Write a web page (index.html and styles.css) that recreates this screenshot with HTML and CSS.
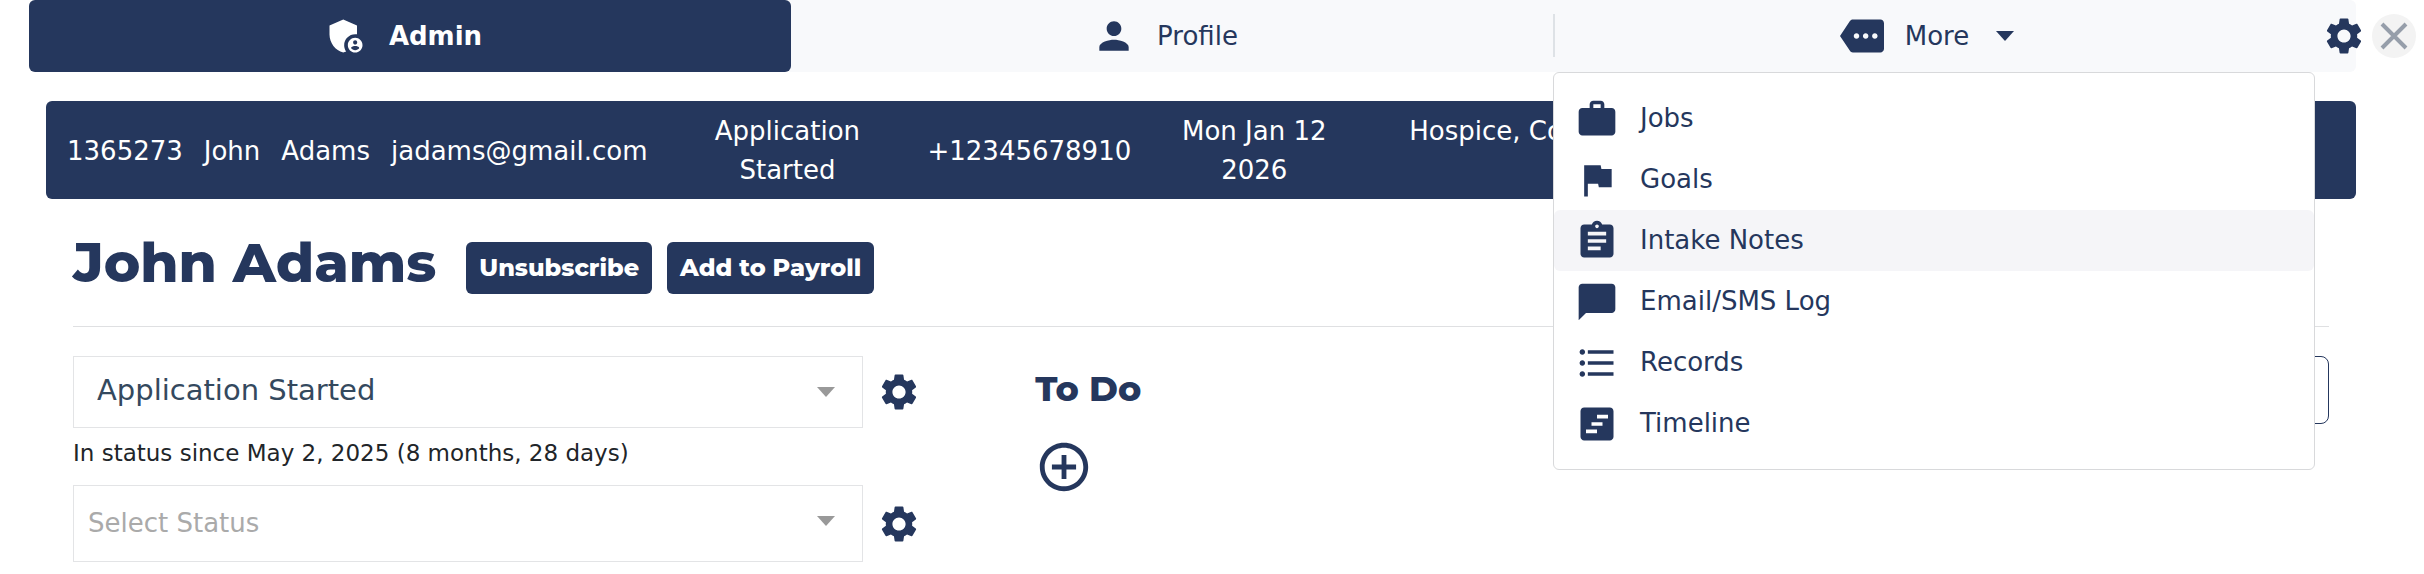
FILE: index.html
```html
<!DOCTYPE html>
<html lang="en">
<head>
  <meta charset="UTF-8" />
  <meta name="viewport" content="width=device-width, initial-scale=1.0"/>
  <title>John Adams</title>
  <link rel="stylesheet" href="styles.css">
</head>
<body>

  <!-- Gear shape shared by the settings buttons -->
  <svg class="sprite">
    <symbol id="gear" viewBox="0 0 24 24"><path d="M19.14 12.94c.04-.3.06-.61.06-.94 0-.32-.02-.64-.07-.94l2.03-1.58c.18-.14.23-.41.12-.61l-1.92-3.32c-.12-.22-.37-.29-.59-.22l-2.39.96c-.5-.38-1.03-.7-1.62-.94l-.36-2.54c-.04-.24-.24-.41-.48-.41h-3.84c-.24 0-.43.17-.47.41l-.36 2.54c-.59.24-1.13.57-1.62.94l-2.39-.96c-.22-.08-.47 0-.59.22L2.74 8.87c-.12.21-.08.47.12.61l2.03 1.58c-.05.3-.09.63-.09.94s.02.64.07.94l-2.03 1.58c-.18.14-.23.41-.12.61l1.92 3.32c.12.22.37.29.59.22l2.39-.96c.5.38 1.03.7 1.62.94l.36 2.54c.05.24.24.41.48.41h3.84c.24 0 .44-.17.47-.41l.36-2.54c.59-.24 1.13-.56 1.62-.94l2.39.96c.22.08.47 0 .59-.22l1.92-3.32c.12-.22.07-.47-.12-.61l-2.01-1.58zM12 15.6c-1.98 0-3.6-1.62-3.6-3.6s1.62-3.6 3.6-3.6 3.6 1.62 3.6 3.6-1.62 3.6-3.6 3.6z"/></symbol>
  </svg>

  <!-- Top bar -->
  <header class="topbar">
    <nav class="tabs">
      <button type="button" class="tab active">
        <svg class="icon" viewBox="0 0 24 24"><path d="M17 11c.34 0 .67.04 1 .09V6.27L10.5 3 3 6.27v4.91c0 4.54 3.2 8.79 7.5 9.82.55-.13 1.08-.32 1.6-.55-.69-.98-1.1-2.17-1.1-3.45 0-3.31 2.69-6 6-6z"/><path d="M17 13c-2.21 0-4 1.79-4 4s1.79 4 4 4 4-1.79 4-4-1.79-4-4-4zm0 1.38c.62 0 1.12.51 1.12 1.12s-.51 1.12-1.12 1.12-1.12-.51-1.12-1.12.5-1.12 1.12-1.12zm0 5.37c-.93 0-1.74-.46-2.24-1.17.05-.72 1.51-1.08 2.24-1.08s2.19.36 2.24 1.08c-.5.71-1.31 1.17-2.24 1.17z"/></svg>
        <span>Admin</span>
      </button>
      <button type="button" class="tab">
        <svg class="icon" viewBox="0 0 24 24"><path d="M12 12c2.21 0 4-1.79 4-4s-1.79-4-4-4-4 1.79-4 4 1.79 4 4 4zm0 2c-2.67 0-8 1.34-8 4v2h16v-2c0-2.66-5.33-4-8-4z"/></svg>
        <span>Profile</span>
      </button>
      <div class="tab-more">
        <button type="button" class="tab" aria-expanded="true">
          <svg class="icon" viewBox="0 0 24 24"><path d="M22 3H7c-.69 0-1.23.35-1.59.88L0 12l5.41 8.11c.36.53.9.89 1.59.89h15c1.1 0 2-.9 2-2V5c0-1.1-.9-2-2-2zM9 13.5c-.83 0-1.5-.67-1.5-1.5s.67-1.5 1.5-1.5 1.5.67 1.5 1.5-.67 1.5-1.5 1.5zm5 0c-.83 0-1.5-.67-1.5-1.5s.67-1.5 1.5-1.5 1.5.67 1.5 1.5-.67 1.5-1.5 1.5zm5 0c-.83 0-1.5-.67-1.5-1.5s.67-1.5 1.5-1.5 1.5.67 1.5 1.5-.67 1.5-1.5 1.5z"/></svg>
          <span>More</span>
          <span class="caret"></span>
        </button>
        <div class="menu">
          <a href="#" class="menu-item">
            <svg class="icon" viewBox="0 0 24 24"><path d="M20 6h-4V4c0-1.11-.89-2-2-2h-4c-1.11 0-2 .89-2 2v2H4c-1.11 0-2 .89-2 2v11c0 1.11.89 2 2 2h16c1.11 0 2-.89 2-2V8c0-1.11-.89-2-2-2zm-6 0h-4V4h4v2z"/></svg>
            Jobs
          </a>
          <a href="#" class="menu-item">
            <svg class="icon" viewBox="0 0 24 24"><path d="M14.4 6L14 4H5v17h2v-7h5.6l.4 2h7V6z"/></svg>
            Goals
          </a>
          <a href="#" class="menu-item hovered">
            <svg class="icon" viewBox="0 0 24 24"><path d="M19 3h-4.18C14.4 1.84 13.3 1 12 1c-1.3 0-2.4.84-2.82 2H5c-1.1 0-2 .9-2 2v14c0 1.1.9 2 2 2h14c1.1 0 2-.9 2-2V5c0-1.1-.9-2-2-2zm-7 0c.55 0 1 .45 1 1s-.45 1-1 1-1-.45-1-1 .45-1 1-1zm2 14H7v-2h7v2zm3-4H7v-2h10v2zm0-4H7V7h10v2z"/></svg>
            Intake Notes
          </a>
          <a href="#" class="menu-item">
            <svg class="icon" viewBox="0 0 24 24"><path d="M20 2H4c-1.1 0-2 .9-2 2v18l4-4h14c1.1 0 2-.9 2-2V4c0-1.1-.9-2-2-2z"/></svg>
            Email/SMS Log
          </a>
          <a href="#" class="menu-item">
            <svg class="icon" viewBox="0 0 24 24"><path d="M4 10.5c-.83 0-1.5.67-1.5 1.5s.67 1.5 1.5 1.5 1.5-.67 1.5-1.5-.67-1.5-1.5-1.5zm0-6c-.83 0-1.5.67-1.5 1.5S3.17 7.5 4 7.5 5.5 6.83 5.5 6 4.83 4.5 4 4.5zm0 12c-.83 0-1.5.68-1.5 1.5s.68 1.5 1.5 1.5 1.5-.68 1.5-1.5-.67-1.5-1.5-1.5zM7 19h14v-2H7v2zm0-6h14v-2H7v2zm0-8v2h14V5H7z"/></svg>
            Records
          </a>
          <a href="#" class="menu-item">
            <svg class="icon" viewBox="0 0 24 24"><path d="M19 3H5c-1.1 0-2 .9-2 2v14c0 1.1.9 2 2 2h14c1.1 0 2-.9 2-2V5c0-1.1-.9-2-2-2zm-7 14H6v-2h6v2zm3-4H9v-2h6v2zm3-4h-6V7h6v2z"/></svg>
            Timeline
          </a>
        </div>
      </div>
      <button type="button" class="icon-btn tabs-settings" aria-label="Settings">
        <svg class="icon"><use href="#gear"/></svg>
      </button>
    </nav>
    <button type="button" class="close-btn" aria-label="Close">
      <svg viewBox="0 0 44 44"><path d="M10 10l24 24M34 10L10 34"/></svg>
    </button>
  </header>

  <!-- Applicant summary -->
  <section class="summary">
    <span>1365273</span>
    <span>John</span>
    <span>Adams</span>
    <span>jadams@gmail.com</span>
    <span class="summary-status">Application Started</span>
    <span>+12345678910</span>
    <span class="summary-date">Mon Jan 12 2026</span>
    <span class="summary-services">Hospice, Companion</span>
  </section>

  <main class="content">
    <div class="title-row">
      <h1>John Adams</h1>
      <button type="button" class="btn">Unsubscribe</button>
      <button type="button" class="btn">Add to Payroll</button>
    </div>

    <div class="columns">
      <section>
        <div class="field">
          <div class="select-wrap">
            <select class="select-current" aria-label="Current status">
              <option>Application Started</option>
            </select>
          </div>
          <button type="button" class="icon-btn" aria-label="Status settings">
            <svg class="icon"><use href="#gear"/></svg>
          </button>
        </div>
        <p class="since">In status since May 2, 2025 (8 months, 28 days)</p>
        <div class="field">
          <div class="select-wrap">
            <select class="select-next" aria-label="Select status">
              <option>Select Status</option>
            </select>
          </div>
          <button type="button" class="icon-btn" aria-label="Status settings">
            <svg class="icon"><use href="#gear"/></svg>
          </button>
        </div>
      </section>

      <section>
        <h2>To Do</h2>
        <button type="button" class="icon-btn add-btn" aria-label="Add to do">
          <svg viewBox="0 0 24 24"><path d="M13 7h-2v4H7v2h4v4h2v-4h4v-2h-4V7zm-1-5C6.48 2 2 6.48 2 12s4.48 10 10 10 10-4.48 10-10S17.52 2 12 2zm0 18c-4.41 0-8-3.59-8-8s3.59-8 8-8 8 3.59 8 8-3.59 8-8 8z"/></svg>
        </button>
      </section>

      <section>
        <input type="text" class="note-input" aria-label="Note">
      </section>
    </div>
  </main>

</body>
</html>
```
FILE: styles.css
```css
* {
  margin: 0;
  padding: 0;
  box-sizing: border-box;
}

body {
  font-family: Verdana, "DejaVu Sans", sans-serif;
  font-size: 26px;
  line-height: 39px;
  color: #212529;
  background-color: white;
}

button, select, input {
  font: inherit;
  color: inherit;
}

button {
  background: none;
  border: none;
  cursor: pointer;
}

.sprite {
  display: none;
}

.icon {
  width: 44px;
  height: 44px;
  fill: currentColor;
  flex: none;
}

.icon-btn {
  display: flex;
  color: #25375d;
}

/* Top bar */
.topbar {
  display: flex;
  align-items: center;
  gap: 16px;
  padding: 0 8px 0 29px;
}

.tabs {
  flex: 1;
  display: grid;
  grid-template-columns: 1fr 1fr 1fr 41px;
  align-items: center;
  height: 72px;
  background-color: #f8f9fb;
  border-radius: 6px;
  color: #25375d;
}

.tab {
  display: flex;
  align-items: center;
  justify-content: center;
  gap: 21px;
  width: 100%;
  height: 72px;
  padding-right: 14px;
  border-radius: 6px;
}

.tab.active {
  background-color: #25375d;
  color: white;
  font-weight: bold;
}

.tab-more {
  position: relative;
}

.tab-more::before {
  content: "";
  position: absolute;
  top: 14px;
  left: 0;
  height: 43px;
  border-left: 2px solid #dee2e6;
}

.caret {
  margin-left: 6px;
  border: 9px solid transparent;
  border-top: 10px solid #25375d;
  border-bottom: none;
}

.menu {
  position: absolute;
  top: 100%;
  left: 0;
  right: 0;
  z-index: 10;
  padding: 15px 0;
  background-color: white;
  border: 1px solid #d8d9db;
  border-radius: 6px;
}

.menu-item {
  display: flex;
  align-items: center;
  gap: 21px;
  height: 61px;
  padding-left: 21px;
  border-radius: 6px;
  color: #25375d;
  text-decoration: none;
}

.menu-item.hovered,
.menu-item:hover {
  background-color: #f5f5f8;
}

.tabs-settings {
  margin-left: 7px;
}

.close-btn {
  width: 44px;
  height: 44px;
  border-radius: 50%;
  background-color: #f3f3f3;
}

.close-btn svg {
  display: block;
  fill: none;
  stroke: #969eaa;
  stroke-width: 4;
}

/* Applicant summary */
.summary {
  display: flex;
  align-items: center;
  gap: 21px;
  margin: 29px 68px 0 46px;
  padding: 11px 21px 9px;
  background-color: #25375d;
  color: white;
  border-radius: 6px;
  text-align: center;
}

.summary-status {
  width: 238px;
}

.summary-date {
  width: 204px;
}

.summary-services {
  align-self: flex-start;
  padding-left: 32px;
  white-space: nowrap;
}

/* Content */
.content {
  margin: 0 95px 0 73px;
}

.title-row {
  display: flex;
  align-items: flex-start;
  gap: 15px;
  padding: 29px 0;
  border-bottom: 1px solid #dfe0e2;
}

h1, h2, .btn {
  font-family: Gotham, Montserrat, sans-serif;
  font-weight: 800;
}

h1 {
  margin-right: 15px;
  font-size: 55px;
  line-height: 69px;
  color: #25375d;
}

.btn {
  height: 52px;
  margin-top: 14px;
  padding: 0 13px 2px;
  background-color: #25375d;
  color: white;
  border-radius: 6px;
  font-size: 24px;
}

.columns {
  display: grid;
  grid-template-columns: 37.6% 1fr 1fr;
  gap: 114px;
  padding-top: 29px;
}

.field {
  display: flex;
  align-items: center;
  gap: 14px;
}

.select-wrap {
  flex: 1;
  position: relative;
}

.select-wrap::after {
  content: "";
  position: absolute;
  top: 31px;
  right: 28px;
  border: 9px solid transparent;
  border-top: 10px solid #999;
  border-bottom: none;
  pointer-events: none;
}

select {
  appearance: none;
  display: block;
  width: 100%;
  background-color: white;
  border: 1px solid #e3e4e6;
  border-radius: 0;
}

.select-current {
  height: 72px;
  padding: 0 23px 4px;
  font-size: 29px;
  color: #34495e;
}

.select-next {
  height: 77px;
  padding: 0 14px;
  color: #aaa;
}

.since {
  padding: 6px 0 12px;
  font-size: 23px;
}

h2 {
  font-size: 35px;
  line-height: 66px;
  color: #25375d;
}

.add-btn {
  margin-top: 16px;
}

.add-btn svg {
  width: 58px;
  height: 58px;
  fill: currentColor;
}

.note-input {
  width: 100%;
  height: 68px;
  padding: 0 16px;
  border: 1px solid #25375d;
  border-radius: 8px;
}
```
